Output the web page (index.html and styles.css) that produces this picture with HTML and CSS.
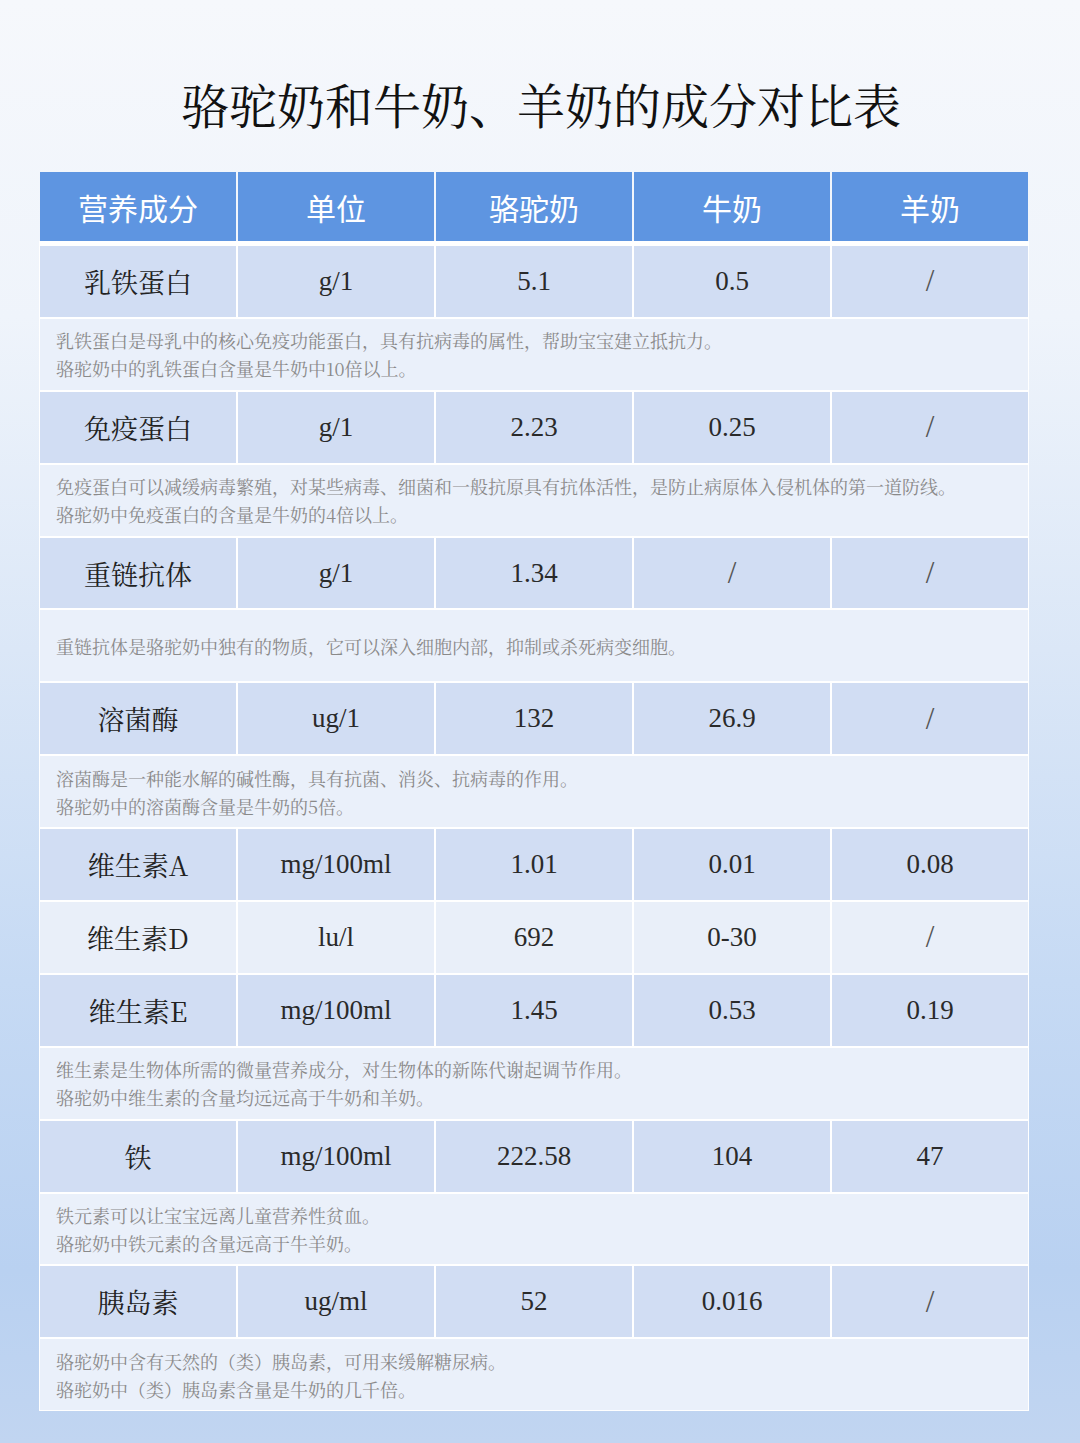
FILE: index.html
```html
<!DOCTYPE html>
<html lang="zh-CN">
<head>
<meta charset="utf-8">
<title>骆驼奶和牛奶、羊奶的成分对比表</title>
<link rel="stylesheet" href="styles.css">
</head>
<body>
<div class="page">
  <h1 class="title">骆驼奶和牛奶、羊奶的成分对比表</h1>
  <div class="table">
    <div class="thead">
      <div class="th">营养成分</div>
      <div class="th">单位</div>
      <div class="th">骆驼奶</div>
      <div class="th">牛奶</div>
      <div class="th">羊奶</div>
    </div>
    <div class="tbody">
      <div class="row">
        <div class="td name">乳铁蛋白</div>
        <div class="td num">g/1</div>
        <div class="td num">5.1</div>
        <div class="td num">0.5</div>
        <div class="td num slash">/</div>
      </div>
      <div class="note">
        <p>乳铁蛋白是母乳中的核心免疫功能蛋白，具有抗病毒的属性，帮助宝宝建立抵抗力。</p>
        <p>骆驼奶中的乳铁蛋白含量是牛奶中10倍以上。</p>
      </div>
      <div class="row">
        <div class="td name">免疫蛋白</div>
        <div class="td num">g/1</div>
        <div class="td num">2.23</div>
        <div class="td num">0.25</div>
        <div class="td num slash">/</div>
      </div>
      <div class="note">
        <p>免疫蛋白可以减缓病毒繁殖，对某些病毒、细菌和一般抗原具有抗体活性，是防止病原体入侵机体的第一道防线。</p>
        <p>骆驼奶中免疫蛋白的含量是牛奶的4倍以上。</p>
      </div>
      <div class="row">
        <div class="td name">重链抗体</div>
        <div class="td num">g/1</div>
        <div class="td num">1.34</div>
        <div class="td num slash">/</div>
        <div class="td num slash">/</div>
      </div>
      <div class="note">
        <p>重链抗体是骆驼奶中独有的物质，它可以深入细胞内部，抑制或杀死病变细胞。</p>
      </div>
      <div class="row">
        <div class="td name">溶菌酶</div>
        <div class="td num">ug/1</div>
        <div class="td num">132</div>
        <div class="td num">26.9</div>
        <div class="td num slash">/</div>
      </div>
      <div class="note">
        <p>溶菌酶是一种能水解的碱性酶，具有抗菌、消炎、抗病毒的作用。</p>
        <p>骆驼奶中的溶菌酶含量是牛奶的5倍。</p>
      </div>
      <div class="row">
        <div class="td name">维生素A</div>
        <div class="td num">mg/100ml</div>
        <div class="td num">1.01</div>
        <div class="td num">0.01</div>
        <div class="td num">0.08</div>
      </div>
      <div class="row light">
        <div class="td name">维生素D</div>
        <div class="td num">lu/l</div>
        <div class="td num">692</div>
        <div class="td num">0-30</div>
        <div class="td num slash">/</div>
      </div>
      <div class="row">
        <div class="td name">维生素E</div>
        <div class="td num">mg/100ml</div>
        <div class="td num">1.45</div>
        <div class="td num">0.53</div>
        <div class="td num">0.19</div>
      </div>
      <div class="note">
        <p>维生素是生物体所需的微量营养成分，对生物体的新陈代谢起调节作用。</p>
        <p>骆驼奶中维生素的含量均远远高于牛奶和羊奶。</p>
      </div>
      <div class="row">
        <div class="td name">铁</div>
        <div class="td num">mg/100ml</div>
        <div class="td num">222.58</div>
        <div class="td num">104</div>
        <div class="td num">47</div>
      </div>
      <div class="note">
        <p>铁元素可以让宝宝远离儿童营养性贫血。</p>
        <p>骆驼奶中铁元素的含量远高于牛羊奶。</p>
      </div>
      <div class="row">
        <div class="td name">胰岛素</div>
        <div class="td num">ug/ml</div>
        <div class="td num">52</div>
        <div class="td num">0.016</div>
        <div class="td num slash">/</div>
      </div>
      <div class="note">
        <p>骆驼奶中含有天然的（类）胰岛素，可用来缓解糖尿病。</p>
        <p>骆驼奶中（类）胰岛素含量是牛奶的几千倍。</p>
      </div>
    </div>
  </div>
</div>
</body>
</html>
```

FILE: styles.css
```css
html, body {
  margin: 0;
  padding: 0;
}

body {
  width: 1080px;
  height: 1443px;
  overflow: hidden;
  background: linear-gradient(180deg, #f6f8fc 0%, #eff4fb 22%, #dbe7f7 45%, #c6daf4 68%, #b9d1f1 88%, #c1d5f1 100%);
  font-family: "Noto Serif CJK SC", "Liberation Serif", "Noto Sans CJK SC", serif;
}

.page {
  display: flex;
  flex-direction: column;
  padding-top: 74px;
}

.title {
  margin: 0;
  height: 60px;
  line-height: 60px;
  font-size: 48px;
  font-weight: 400;
  color: #111;
  text-align: center;
  padding-left: 2px;
  font-family: "Noto Serif CJK SC", "Liberation Serif", "Noto Sans CJK SC", serif;
}

.table {
  margin-top: 38px;
  margin-left: 39px;
  width: 990px;
  display: flex;
  flex-direction: column;
}

.thead {
  display: grid;
  grid-template-columns: repeat(5, 1fr);
  column-gap: 2px;
  height: 69px;
  padding: 0 1px;
}

.th {
  background: #5e95e1;
  color: #fff;
  font-family: "Noto Sans CJK SC", "Noto Sans", sans-serif;
  font-size: 30px;
  display: flex;
  align-items: center;
  justify-content: center;
}

.tbody {
  background: #fff;
  border: 1px solid #fff;
  border-top-width: 5px;
  display: flex;
  flex-direction: column;
  row-gap: 2px;
}

.row {
  display: grid;
  grid-template-columns: repeat(5, 1fr);
  column-gap: 2px;
  height: 70.9px;
}

.td {
  background: #d1ddf3;
  display: flex;
  align-items: center;
  justify-content: center;
  color: #222;
}

.row.light .td {
  background: #e9eff9;
}

.name {
  font-size: 27px;
  font-family: "Noto Serif CJK SC", "Liberation Serif", "Noto Sans CJK SC", serif;
}

.num {
  font-size: 27px;
  font-family: "Liberation Serif", "Noto Sans CJK SC", serif;
  color: #2a2a2a;
}

.slash {
  font-size: 31px;
  color: #555;
}

.note {
  height: 70.9px;
  background: #eaf0fa;
  display: flex;
  flex-direction: column;
  justify-content: center;
  padding-left: 16px;
  box-sizing: border-box;
}

.note p {
  margin: 0;
  font-size: 18px;
  line-height: 28px;
  color: #8a8a8a;
  font-family: "Noto Serif CJK SC", "Liberation Serif", "Noto Sans CJK SC", serif;
}
```
